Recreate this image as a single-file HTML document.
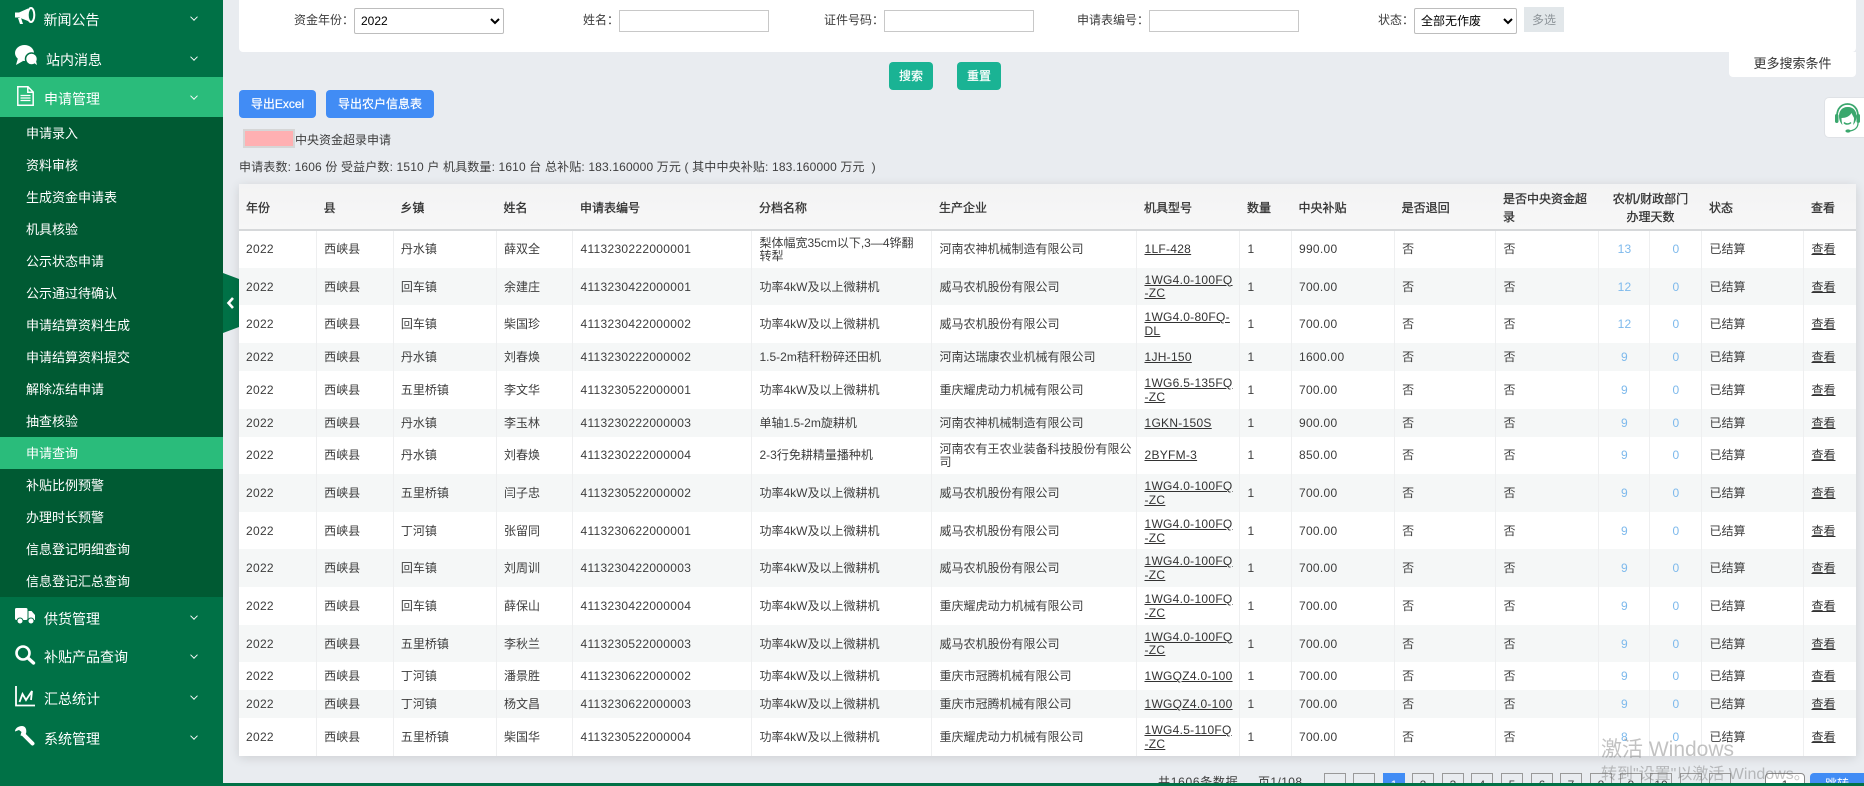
<!DOCTYPE html>
<html lang="zh-CN"><head><meta charset="utf-8"><title>申请查询</title>
<style>
*{box-sizing:border-box}
html,body{margin:0;padding:0;width:1864px;height:786px;overflow:hidden;background:#e9ecf0;font-family:"Liberation Sans","Noto Sans CJK SC",sans-serif;font-size:12px;color:#3d3d3d}
body{position:relative}
.a{position:absolute}
#side{position:absolute;left:0;top:0;width:223px;height:786px;background:#007146;color:#fff}
.m{position:absolute;left:0;width:223px;height:40px;line-height:40px;font-size:14px;white-space:nowrap}
.m span{position:absolute;top:0}
.m i{position:absolute;left:191px;top:16px;width:6px;height:6px;border-right:1.3px solid #fff;border-bottom:1.3px solid #fff;transform:rotate(45deg) scale(.9)}
.m svg{position:absolute;left:0;top:0}
.s{position:absolute;left:0;width:223px;height:32px;line-height:32px;padding-top:1px;padding-left:26px;font-size:13px;background:#005a33;white-space:nowrap}
.act{background:#2abc7b}
label{position:absolute;white-space:nowrap;line-height:16px}
input{position:absolute;background:#fff;border:1px solid #c8c8c8;height:22px;top:10px;margin:0;padding:0}
select{position:absolute;background:#fff;border:1px solid #bdbdbd;border-radius:2px;height:26px;top:8px;margin:0;padding:0 0 0 2px;font:12px "Liberation Sans","Noto Sans CJK SC",sans-serif;color:#000}
.btn{position:absolute;color:#fff;text-align:center;border-radius:4px;font-size:12px;white-space:nowrap;-webkit-text-stroke:.2px #fff}
.g{background:#1ab394;top:62px;height:28px;line-height:29px;width:44px}
.b{background:#418cf5;top:90px;height:28px;line-height:29px}
table{position:absolute;left:239px;top:184px;width:1617px;border-collapse:collapse;table-layout:fixed;background:#fff;box-shadow:0 2px 10px rgba(0,0,0,.12)}
th{background:linear-gradient(#f3f3f4,#f7f7f7);font-weight:400;-webkit-text-stroke:.3px #333;text-align:left;height:46px;padding:2px 7px 0;line-height:18px;border-bottom:2px solid #d6d8da;color:#333;white-space:nowrap}
td{padding:2px 7px 0;line-height:13.8px;border-right:1px solid #eeeff0;white-space:nowrap;vertical-align:middle;color:#3d3d3d}
td:last-child{border-right:0}
tr.t td{height:37.64px}
tr.o td{height:28px}
tbody tr:nth-child(even){background:#f5f7f7}
td:nth-child(1),td:nth-child(5),td:nth-child(10){letter-spacing:.3px}
td:nth-child(9){letter-spacing:.1px}
td u,td:nth-child(16) u{color:#333}
td:nth-child(8) u{letter-spacing:.28px}
td:nth-child(13),td:nth-child(14){text-align:center;color:#7db9ec;letter-spacing:.2px}
.p{position:absolute;top:773px;width:22px;height:24px;border:1px solid #999;text-align:center;line-height:22px;color:#444}
.p.on{background:#418cf5;border-color:#418cf5;color:#fff}
</style></head><body>

<div id="side">
<div class="m" style="top:0"><svg width="40" height="40" viewBox="0 0 40 40"><g fill="#fff"><path d="M15 12.5h4l9-4v12.5l-9-3.500h-4z"/><ellipse cx="31" cy="15" rx="3.300" ry="7" fill="none" stroke="#fff" stroke-width="2"/><path d="M18 18h3l2 6h-3z"/></g></svg><span style="left:43.500px">新闻公告</span><i style="top:14px"></i></div>
<div class="m" style="top:40px"><svg width="40" height="40" viewBox="0 0 40 40"><g fill="#fff"><ellipse cx="24.500" cy="13" rx="9.500" ry="8"/><path d="M18 18l-2 7 7-4z"/><circle cx="31.500" cy="19" r="6" stroke="#007146" stroke-width="1.500"/><path d="M34 23l3 2-1-4z"/></g></svg><span style="left:46px">站内消息</span><i style="top:14px"></i></div>
<div class="m act" style="top:77px"><svg width="40" height="40" viewBox="0 0 40 40"><path d="M17.800 9.800h10.200l5.200 5.200v13.200H17.800z" fill="none" stroke="#fff" stroke-width="1.500"/><path d="M27.800 9.800v5.400h5.400" fill="none" stroke="#fff" stroke-width="1.500"/><path d="M20.500 18.500h10M20.500 21h10M20.500 23.500h10" stroke="#fff" stroke-width="1.300"/></svg><span style="left:44px;top:2px">申请管理</span><i style="top:16px"></i></div>
<div class="s" style="top:117px">申请录入</div>
<div class="s" style="top:149px">资料审核</div>
<div class="s" style="top:181px">生成资金申请表</div>
<div class="s" style="top:213px">机具核验</div>
<div class="s" style="top:245px">公示状态申请</div>
<div class="s" style="top:277px">公示通过待确认</div>
<div class="s" style="top:309px">申请结算资料生成</div>
<div class="s" style="top:341px">申请结算资料提交</div>
<div class="s" style="top:373px">解除冻结申请</div>
<div class="s" style="top:405px">抽查核验</div>
<div class="s act" style="top:437px">申请查询</div>
<div class="s" style="top:469px">补贴比例预警</div>
<div class="s" style="top:501px">办理时长预警</div>
<div class="s" style="top:533px">信息登记明细查询</div>
<div class="s" style="top:565px">信息登记汇总查询</div>
<div class="m" style="top:599px"><svg width="40" height="40" viewBox="0 0 40 40"><g fill="#fff"><rect x="15" y="9" width="12.500" height="12" rx="1.500"/><path d="M28.500 12h3l3.500 4v5h-6.500z"/><circle cx="20" cy="22" r="3" stroke="#007146"/><circle cx="31" cy="22" r="3" stroke="#007146"/></g></svg><span style="left:44px">供货管理</span><i style="top:14px"></i></div>
<div class="m" style="top:637px"><svg width="40" height="40" viewBox="0 0 40 40"><circle cx="23" cy="16" r="6.500" fill="none" stroke="#fff" stroke-width="2.600"/><path d="M28 21l5.500 5" stroke="#fff" stroke-width="3.400" stroke-linecap="round"/></svg><span style="left:44px">补贴产品查询</span><i style="top:15px"></i></div>
<div class="m" style="top:679px"><svg width="40" height="40" viewBox="0 0 40 40"><path d="M16 7v19.500h19" fill="none" stroke="#fff" stroke-width="1.800"/><path d="M19.500 23l3-8 3.500 6 6-9 -1 9" fill="none" stroke="#fff" stroke-width="1.800"/></svg><span style="left:44px">汇总统计</span><i style="top:14px"></i></div>
<div class="m" style="top:719px"><svg width="40" height="40" viewBox="0 0 40 40"><path d="M22 7C18 7 15 9.500 15 12.500L19 11l2.500 2-1 3.500c3 1 5.500-.5 5.800-3.500.3-3.500-1.300-6-4.300-6z" fill="#fff"/><path d="M23 15l9.500 9.500" stroke="#fff" stroke-width="4" stroke-linecap="round"/></svg><span style="left:44px">系统管理</span><i style="top:14px"></i></div>
</div>
<svg class="a" style="left:223px;top:273px" width="16" height="60" viewBox="0 0 16 60"><path d="M0 0L16 6V54L0 60z" fill="#007146"/><path d="M10 25l-4.500 5 4.500 5" fill="none" stroke="#fff" stroke-width="2.600"/></svg>

<div class="a" style="left:239px;top:0;width:1617px;height:52px;background:#fff;border-radius:0 0 4px 4px"></div>
<label style="left:294px;top:12px">资金年份：</label>
<select style="left:354px;width:150px"><option>2022</option></select>
<label style="left:583px;top:12px">姓名：</label>
<input style="left:619px;width:150px">
<label style="left:824px;top:12px">证件号码：</label>
<input style="left:884px;width:150px">
<label style="left:1077px;top:12px">申请表编号：</label>
<input style="left:1149px;width:150px">
<label style="left:1378px;top:12px">状态：</label>
<select style="left:1414px;width:103px"><option>全部无作废</option></select>
<div class="a" style="left:1524px;top:7px;width:40px;height:25px;line-height:27px;background:#e2e7ea;color:#8d9499;text-align:center">多选</div>
<div class="a" style="left:1729px;top:52px;width:127px;height:25px;line-height:23px;font-size:13px;background:#fff;border-radius:0 0 4px 4px;text-align:center;color:#333">更多搜索条件</div>
<div class="btn g" style="left:889px">搜索</div>
<div class="btn g" style="left:957px">重置</div>
<div class="btn b" style="left:239px;width:77px">导出Excel</div>
<div class="btn b" style="left:326px;width:108px">导出农户信息表</div>
<div class="a" style="left:243px;top:129px;width:52px;height:19px;background:#ffb0b2;border:2px solid #d6d6d6"></div>
<div class="a" style="left:295px;top:132px;line-height:16px;white-space:nowrap">中央资金超录申请</div>
<div class="a" style="left:239px;top:159px;line-height:16px;white-space:pre;letter-spacing:.15px">申请表数: 1606 份 受益户数: 1510 户 机具数量: 1610 台 总补贴: 183.160000 万元 ( 其中中央补贴: 183.160000 万元  )</div>

<div class="a" style="left:1824px;top:97px;width:40px;height:41px;background:#fff;border:1px solid #dfe2e6;border-right:0;border-radius:5px 0 0 5px"></div>
<svg class="a" style="left:1835px;top:103px" width="25" height="30" viewBox="0 0 25 30"><path d="M2 13C2 5 7 1 12.500 1S23 5 23 13" fill="none" stroke="#3aa76d" stroke-width="1.800"/><path d="M12.500 4C7 4 4 8 4 13c0 4 1.500 7 3.500 9-0.500-2-1-4-1-7 4 0 8-1.500 10-5 1 2.500 2.500 4.500 2.500 5 0 3-.5 5-1 7 2-2 3.500-5 3.500-9 0-5-3-9-8.500-9z" fill="#3aa76d"/><rect x="0" y="11" width="3.500" height="9" rx="1.700" fill="#3aa76d"/><rect x="21.500" y="11" width="3.500" height="9" rx="1.700" fill="#3aa76d"/><path d="M9 19.500c1.500 2 5 2 7 0" fill="none" stroke="#3aa76d" stroke-width="1.500"/><path d="M23 20c0 5-4 7.500-9 8" fill="none" stroke="#3aa76d" stroke-width="1.300"/><ellipse cx="13" cy="28" rx="2.600" ry="1.600" fill="#3aa76d"/></svg>

<table>
<colgroup><col style="width:77.6px"><col style="width:76.8px"><col style="width:103.1px"><col style="width:76.5px"><col style="width:179px"><col style="width:180px"><col style="width:205px"><col style="width:103px"><col style="width:51.5px"><col style="width:103.1px"><col style="width:101.4px"><col style="width:103px"><col style="width:51px"><col style="width:52px"><col style="width:102px"><col style="width:52px"></colgroup>
<thead><tr><th>年份</th><th>县</th><th>乡镇</th><th>姓名</th><th>申请表编号</th><th>分档名称</th><th>生产企业</th><th>机具型号</th><th>数量</th><th>中央补贴</th><th>是否退回</th><th>是否中央资金超<br>录</th><th colspan="2" style="text-align:center">农机/财政部门<br>办理天数</th><th>状态</th><th>查看</th></tr></thead>
<tbody>
<tr class="t"><td>2022</td><td>西峡县</td><td>丹水镇</td><td>薛双全</td><td>4113230222000001</td><td>梨体幅宽35cm以下,3—4铧翻<br>转犁</td><td>河南农神机械制造有限公司</td><td><u>1LF-428</u></td><td>1</td><td>990.00</td><td>否</td><td>否</td><td>13</td><td>0</td><td>已结算</td><td><u>查看</u></td></tr>
<tr class="t"><td>2022</td><td>西峡县</td><td>回车镇</td><td>余建庄</td><td>4113230422000001</td><td>功率4kW及以上微耕机</td><td>威马农机股份有限公司</td><td><u>1WG4.0-100FQ<br>-ZC</u></td><td>1</td><td>700.00</td><td>否</td><td>否</td><td>12</td><td>0</td><td>已结算</td><td><u>查看</u></td></tr>
<tr class="t"><td>2022</td><td>西峡县</td><td>回车镇</td><td>柴国珍</td><td>4113230422000002</td><td>功率4kW及以上微耕机</td><td>威马农机股份有限公司</td><td><u>1WG4.0-80FQ-<br>DL</u></td><td>1</td><td>700.00</td><td>否</td><td>否</td><td>12</td><td>0</td><td>已结算</td><td><u>查看</u></td></tr>
<tr class="o"><td>2022</td><td>西峡县</td><td>丹水镇</td><td>刘春焕</td><td>4113230222000002</td><td>1.5-2m秸秆粉碎还田机</td><td>河南达瑞康农业机械有限公司</td><td><u>1JH-150</u></td><td>1</td><td>1600.00</td><td>否</td><td>否</td><td>9</td><td>0</td><td>已结算</td><td><u>查看</u></td></tr>
<tr class="t"><td>2022</td><td>西峡县</td><td>五里桥镇</td><td>李文华</td><td>4113230522000001</td><td>功率4kW及以上微耕机</td><td>重庆耀虎动力机械有限公司</td><td><u>1WG6.5-135FQ<br>-ZC</u></td><td>1</td><td>700.00</td><td>否</td><td>否</td><td>9</td><td>0</td><td>已结算</td><td><u>查看</u></td></tr>
<tr class="o"><td>2022</td><td>西峡县</td><td>丹水镇</td><td>李玉林</td><td>4113230222000003</td><td>单轴1.5-2m旋耕机</td><td>河南农神机械制造有限公司</td><td><u>1GKN-150S</u></td><td>1</td><td>900.00</td><td>否</td><td>否</td><td>9</td><td>0</td><td>已结算</td><td><u>查看</u></td></tr>
<tr class="t"><td>2022</td><td>西峡县</td><td>丹水镇</td><td>刘春焕</td><td>4113230222000004</td><td>2-3行免耕精量播种机</td><td>河南农有王农业装备科技股份有限公<br>司</td><td><u>2BYFM-3</u></td><td>1</td><td>850.00</td><td>否</td><td>否</td><td>9</td><td>0</td><td>已结算</td><td><u>查看</u></td></tr>
<tr class="t"><td>2022</td><td>西峡县</td><td>五里桥镇</td><td>闫子忠</td><td>4113230522000002</td><td>功率4kW及以上微耕机</td><td>威马农机股份有限公司</td><td><u>1WG4.0-100FQ<br>-ZC</u></td><td>1</td><td>700.00</td><td>否</td><td>否</td><td>9</td><td>0</td><td>已结算</td><td><u>查看</u></td></tr>
<tr class="t"><td>2022</td><td>西峡县</td><td>丁河镇</td><td>张留同</td><td>4113230622000001</td><td>功率4kW及以上微耕机</td><td>威马农机股份有限公司</td><td><u>1WG4.0-100FQ<br>-ZC</u></td><td>1</td><td>700.00</td><td>否</td><td>否</td><td>9</td><td>0</td><td>已结算</td><td><u>查看</u></td></tr>
<tr class="t"><td>2022</td><td>西峡县</td><td>回车镇</td><td>刘周训</td><td>4113230422000003</td><td>功率4kW及以上微耕机</td><td>威马农机股份有限公司</td><td><u>1WG4.0-100FQ<br>-ZC</u></td><td>1</td><td>700.00</td><td>否</td><td>否</td><td>9</td><td>0</td><td>已结算</td><td><u>查看</u></td></tr>
<tr class="t"><td>2022</td><td>西峡县</td><td>回车镇</td><td>薛保山</td><td>4113230422000004</td><td>功率4kW及以上微耕机</td><td>重庆耀虎动力机械有限公司</td><td><u>1WG4.0-100FQ<br>-ZC</u></td><td>1</td><td>700.00</td><td>否</td><td>否</td><td>9</td><td>0</td><td>已结算</td><td><u>查看</u></td></tr>
<tr class="t"><td>2022</td><td>西峡县</td><td>五里桥镇</td><td>李秋兰</td><td>4113230522000003</td><td>功率4kW及以上微耕机</td><td>威马农机股份有限公司</td><td><u>1WG4.0-100FQ<br>-ZC</u></td><td>1</td><td>700.00</td><td>否</td><td>否</td><td>9</td><td>0</td><td>已结算</td><td><u>查看</u></td></tr>
<tr class="o"><td>2022</td><td>西峡县</td><td>丁河镇</td><td>潘景胜</td><td>4113230622000002</td><td>功率4kW及以上微耕机</td><td>重庆市冠腾机械有限公司</td><td><u>1WGQZ4.0-100</u></td><td>1</td><td>700.00</td><td>否</td><td>否</td><td>9</td><td>0</td><td>已结算</td><td><u>查看</u></td></tr>
<tr class="o"><td>2022</td><td>西峡县</td><td>丁河镇</td><td>杨文昌</td><td>4113230622000003</td><td>功率4kW及以上微耕机</td><td>重庆市冠腾机械有限公司</td><td><u>1WGQZ4.0-100</u></td><td>1</td><td>700.00</td><td>否</td><td>否</td><td>9</td><td>0</td><td>已结算</td><td><u>查看</u></td></tr>
<tr class="t"><td>2022</td><td>西峡县</td><td>五里桥镇</td><td>柴国华</td><td>4113230522000004</td><td>功率4kW及以上微耕机</td><td>重庆耀虎动力机械有限公司</td><td><u>1WG4.5-110FQ<br>-ZC</u></td><td>1</td><td>700.00</td><td>否</td><td>否</td><td>8</td><td>0</td><td>已结算</td><td><u>查看</u></td></tr>
</tbody></table>

<div class="a" style="left:1158px;top:774px;line-height:16px;white-space:nowrap;letter-spacing:.7px">共1606条数据</div>
<div class="a" style="left:1258px;top:774px;line-height:16px;white-space:nowrap;letter-spacing:.4px">页1/108</div>
<div class="p" style="left:1324px"></div>
<div class="p" style="left:1353px"></div>
<div class="p on" style="left:1383px">1</div>
<div class="p" style="left:1412px">2</div>
<div class="p" style="left:1442px">3</div>
<div class="p" style="left:1471px">4</div>
<div class="p" style="left:1501px">5</div>
<div class="p" style="left:1531px">6</div>
<div class="p" style="left:1560px">7</div>
<div class="p" style="left:1590px">8</div>
<div class="p" style="left:1620px">9</div>
<div class="p" style="left:1650px">10</div>
<div class="p" style="left:1680px"></div>
<div class="p" style="left:1709px"></div>
<div class="a" style="left:1765px;top:773px;width:40px;height:24px;background:#fff;border:1px solid #888;border-radius:4px;text-align:center;line-height:22px">1</div>
<div class="a" style="left:1810px;top:773px;width:54px;height:24px;background:#418cf5;color:#fff;border-radius:4px 0 0 4px;text-align:center;line-height:22px">跳转</div>

<div class="a" style="left:1601px;top:736px;font-size:21px;line-height:28px;color:rgba(110,110,110,.42);white-space:nowrap">激活 Windows</div>
<div class="a" style="left:1601px;top:765px;font-size:16px;line-height:20px;color:rgba(110,110,110,.42);white-space:nowrap">转到"设置"以激活 Windows。</div>

<div class="a" style="left:0;top:783px;width:1864px;height:3px;background:#007146"></div>
</body></html>
